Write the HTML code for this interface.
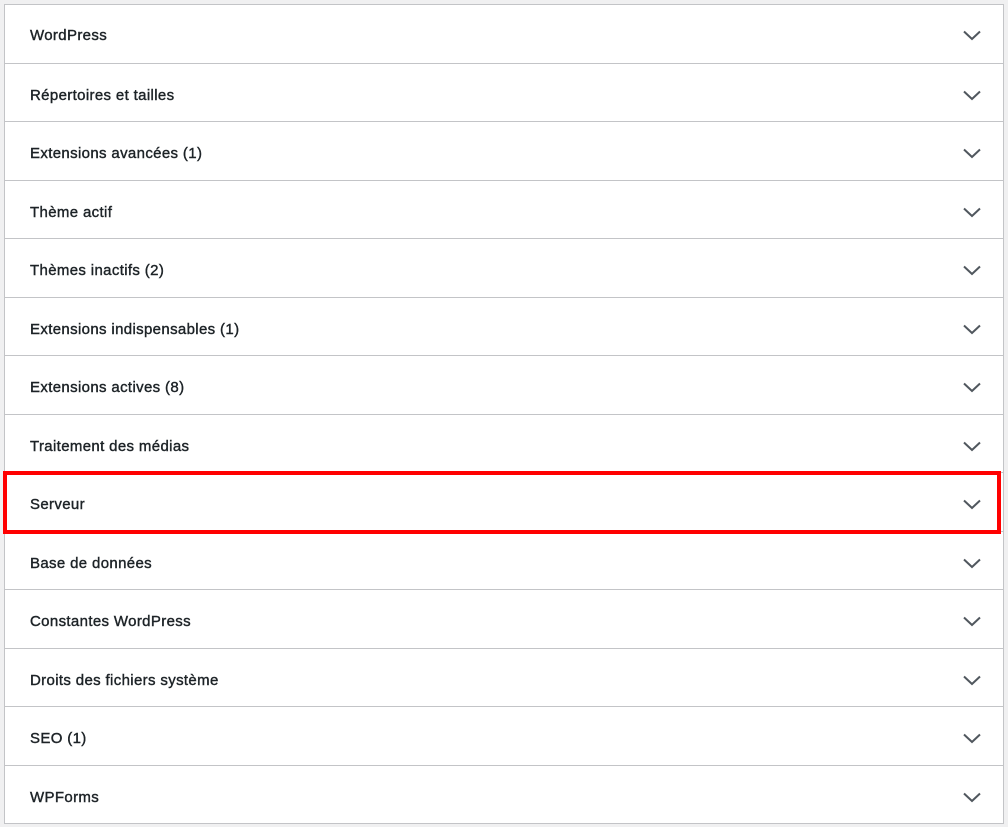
<!DOCTYPE html>
<html><head><meta charset="utf-8"><style>
body{margin:0;background:#f0f0f1;width:1008px;height:827px;position:relative;overflow:hidden;font-family:"Liberation Sans",sans-serif}
.box{position:absolute;left:4px;top:4px;width:998px;height:818px;background:#fff;border:1px solid #c3c4c7}
.row{position:absolute;left:0;width:998px;height:58px;border-top:1px solid #c3c4c7}
.row.f{border-top:none}
.t{position:absolute;left:25px;top:23px;font-size:15px;letter-spacing:0.35px;color:#1d2327;-webkit-text-stroke:0.4px #1d2327;white-space:nowrap}
.row.f .t{top:22px}
svg{position:absolute;left:957px;top:24px}
.row.f svg{top:23px}
.red{position:absolute;left:3px;top:471px;width:990px;height:55px;border:4px solid #f00}
</style></head><body>
<div class="box">
<div class="row f" style="top:0px"><span class="t">WordPress</span><svg width="20" height="14" viewBox="0 0 20 14"><path d="M2 3.5 L10 11 L18 3.5" fill="none" stroke="#50575e" stroke-width="2"/></svg></div>
<div class="row" style="top:58px"><span class="t">Répertoires et tailles</span><svg width="20" height="14" viewBox="0 0 20 14"><path d="M2 3.5 L10 11 L18 3.5" fill="none" stroke="#50575e" stroke-width="2"/></svg></div>
<div class="row" style="top:116px"><span class="t">Extensions avancées (1)</span><svg width="20" height="14" viewBox="0 0 20 14"><path d="M2 3.5 L10 11 L18 3.5" fill="none" stroke="#50575e" stroke-width="2"/></svg></div>
<div class="row" style="top:175px"><span class="t">Thème actif</span><svg width="20" height="14" viewBox="0 0 20 14"><path d="M2 3.5 L10 11 L18 3.5" fill="none" stroke="#50575e" stroke-width="2"/></svg></div>
<div class="row" style="top:233px"><span class="t">Thèmes inactifs (2)</span><svg width="20" height="14" viewBox="0 0 20 14"><path d="M2 3.5 L10 11 L18 3.5" fill="none" stroke="#50575e" stroke-width="2"/></svg></div>
<div class="row" style="top:292px"><span class="t">Extensions indispensables (1)</span><svg width="20" height="14" viewBox="0 0 20 14"><path d="M2 3.5 L10 11 L18 3.5" fill="none" stroke="#50575e" stroke-width="2"/></svg></div>
<div class="row" style="top:350px"><span class="t">Extensions actives (8)</span><svg width="20" height="14" viewBox="0 0 20 14"><path d="M2 3.5 L10 11 L18 3.5" fill="none" stroke="#50575e" stroke-width="2"/></svg></div>
<div class="row" style="top:409px"><span class="t">Traitement des médias</span><svg width="20" height="14" viewBox="0 0 20 14"><path d="M2 3.5 L10 11 L18 3.5" fill="none" stroke="#50575e" stroke-width="2"/></svg></div>
<div class="row" style="top:467px"><span class="t">Serveur</span><svg width="20" height="14" viewBox="0 0 20 14"><path d="M2 3.5 L10 11 L18 3.5" fill="none" stroke="#50575e" stroke-width="2"/></svg></div>
<div class="row" style="top:526px"><span class="t">Base de données</span><svg width="20" height="14" viewBox="0 0 20 14"><path d="M2 3.5 L10 11 L18 3.5" fill="none" stroke="#50575e" stroke-width="2"/></svg></div>
<div class="row" style="top:584px"><span class="t">Constantes WordPress</span><svg width="20" height="14" viewBox="0 0 20 14"><path d="M2 3.5 L10 11 L18 3.5" fill="none" stroke="#50575e" stroke-width="2"/></svg></div>
<div class="row" style="top:643px"><span class="t">Droits des fichiers système</span><svg width="20" height="14" viewBox="0 0 20 14"><path d="M2 3.5 L10 11 L18 3.5" fill="none" stroke="#50575e" stroke-width="2"/></svg></div>
<div class="row" style="top:701px"><span class="t">SEO (1)</span><svg width="20" height="14" viewBox="0 0 20 14"><path d="M2 3.5 L10 11 L18 3.5" fill="none" stroke="#50575e" stroke-width="2"/></svg></div>
<div class="row" style="top:760px"><span class="t">WPForms</span><svg width="20" height="14" viewBox="0 0 20 14"><path d="M2 3.5 L10 11 L18 3.5" fill="none" stroke="#50575e" stroke-width="2"/></svg></div>
</div>
<div class="red"></div>
</body></html>
